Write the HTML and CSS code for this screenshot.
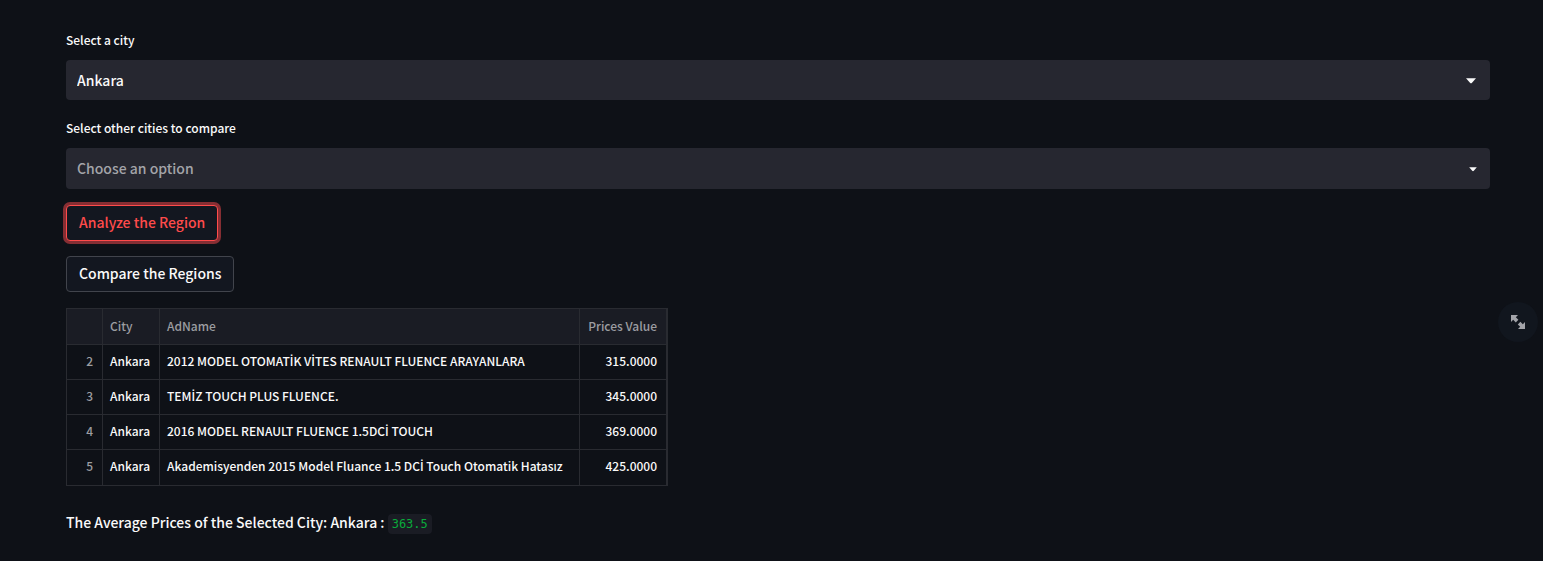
FILE: index.html
```html
<!DOCTYPE html>
<html lang="en">
<head>
<meta charset="utf-8">
<title>City price comparison</title>
<link rel="stylesheet" href="styles.css">
</head>
<body>
<main class="page">
  <div class="fields">
    <div class="field">
      <label class="field-label" for="city">Select a city</label>
      <div class="select-box">
        <select class="select" id="city">
          <option selected>Ankara</option>
        </select>
        <svg class="caret" viewBox="0 0 10 6" width="10" height="6" aria-hidden="true"><path d="M0 0.3H10L6 4.8Q5 5.8 4 4.8Z"/></svg>
      </div>
    </div>
    <div class="field">
      <label class="field-label" for="compare">Select other cities to compare</label>
      <div class="select-box select-box-multi">
        <select class="select select-empty" id="compare">
          <option selected>Choose an option</option>
        </select>
        <svg class="caret" viewBox="0 0 8 5" width="8" height="5" aria-hidden="true"><path d="M0.2 0.3H7.8L4.8 3.8Q4 4.6 3.2 3.8Z"/></svg>
      </div>
    </div>
  </div>
  <div class="actions">
    <button class="button button-focus" type="button">Analyze the Region</button>
    <button class="button" type="button">Compare the Regions</button>
  </div>
  <div class="table-area">
    <table class="data">
      <colgroup><col class="col-index"><col class="col-city"><col class="col-ad"><col class="col-price"></colgroup>
      <thead>
        <tr><th></th><th>City</th><th>AdName</th><th class="number">Prices Value</th></tr>
      </thead>
      <tbody>
        <tr><th class="number">2</th><td>Ankara</td><td>2012 MODEL OTOMAT<span class="dotted">İ</span>K V<span class="dotted">İ</span>TES RENAULT FLUENCE ARAYANLARA</td><td class="number">315.0000</td></tr>
        <tr><th class="number">3</th><td>Ankara</td><td>TEM<span class="dotted">İ</span>Z TOUCH PLUS FLUENCE.</td><td class="number">345.0000</td></tr>
        <tr><th class="number">4</th><td>Ankara</td><td>2016 MODEL RENAULT FLUENCE 1.5DC<span class="dotted">İ</span> TOUCH</td><td class="number">369.0000</td></tr>
        <tr><th class="number">5</th><td>Ankara</td><td>Akademisyenden 2015 Model Fluance 1.5 DC<span class="dotted">İ</span> Touch Otomatik Hatasız</td><td class="number">425.0000</td></tr>
      </tbody>
    </table>
    <button class="expand" type="button" aria-label="View fullscreen">
      <svg viewBox="0 0 14 14" width="14" height="14" aria-hidden="true"><path d="M0 0H7L4.8 2.2L7.4 4.8L4.8 7.4L2.2 4.8L0 7ZM14 14H7L9.2 11.8L6.8 9.4L9.4 6.8L11.8 9.2L14 7Z"/></svg>
    </button>
  </div>
  <p class="summary">The Average Prices of the Selected City: Ankara : <code class="value">363.5</code></p>
</main>
</body>
</html>
```
FILE: styles.css
```css
* {
  box-sizing: border-box;
}

body {
  margin: 0;
  background: #0e1117;
  color: #fafafa;
  font-family: "Noto Sans CJK SC", "Noto Sans", sans-serif;
  font-size: 14px;
  font-weight: 500;
  line-height: 24px;
}

.page {
  display: flex;
  flex-direction: column;
  gap: 16px;
  padding: 32px 53px 24px 66px;
}

.fields {
  display: grid;
  gap: 20px;
}

.field-label {
  display: block;
  margin-bottom: 12px;
  font-size: 12px;
  line-height: 16px;
}

.select-box {
  display: grid;
  align-items: center;
  height: 40px;
  border-radius: 4px;
  background: #262730;
}

.select-box-multi {
  height: 41px;
}

.select {
  grid-area: 1 / 1;
  width: 100%;
  height: 100%;
  padding: 0 32px 0 11px;
  border: 0;
  border-radius: 4px;
  appearance: none;
  background: transparent;
  color: #fafafa;
  font: inherit;
}

.select-empty {
  padding-bottom: 2px;
  color: #a3a4a9;
}

.caret {
  grid-area: 1 / 1;
  justify-self: end;
  margin-top: 2px;
  margin-right: 14px;
  fill: #fafafa;
  pointer-events: none;
}

.select-box-multi .caret {
  margin-right: 13px;
}

.actions {
  display: grid;
  justify-items: start;
  gap: 15px;
}

.button {
  height: 36px;
  padding: 0 12px 2px;
  border: 1px solid #41444c;
  border-radius: 4px;
  background: #131720;
  color: #fafafa;
  font: inherit;
}

.button-focus {
  border-color: #ff4b4b;
  color: #ff4b4b;
  box-shadow: 0 0 0 3px #862e33;
}

.table-area {
  position: relative;
}

.data {
  border-collapse: separate;
  border-spacing: 0;
  border: 1px solid #292b31;
  font-size: 12px;
  line-height: 16px;
  white-space: nowrap;
}

.data th,
.data td {
  height: 35px;
  padding: 0 7px 2px;
  border: solid #292b31;
  border-width: 0 1px 1px 0;
  font-weight: 500;
  text-align: left;
}

.data th {
  color: #9c9da1;
}

.data thead th {
  height: 36px;
  background: #1a1c24;
}

.data tbody tr:last-child > * {
  padding-bottom: 3px;
  border-bottom-width: 0;
}

.data .number {
  padding-right: 9px;
  text-align: right;
}

.dotted {
  font-family: "Open Sans", sans-serif;
  font-weight: 600;
  line-height: 1;
}

.col-index {
  width: 36px;
}

.col-city {
  width: 57px;
}

.col-ad {
  width: 420px;
}

.col-price {
  width: 87px;
}

.expand {
  position: absolute;
  top: -6px;
  right: -48px;
  display: grid;
  place-items: center;
  width: 40px;
  height: 40px;
  padding: 0;
  border: 0;
  border-radius: 50%;
  background: #11161e;
  fill: #a3a4a9;
}

.summary {
  margin: 8px 0 0;
}

.value {
  padding: 3px 4px;
  border-radius: 4px;
  background: #1a1c24;
  color: #09ab3b;
  font-family: "DejaVu Sans Mono", monospace;
  font-size: 12px;
  font-weight: 400;
}
```
